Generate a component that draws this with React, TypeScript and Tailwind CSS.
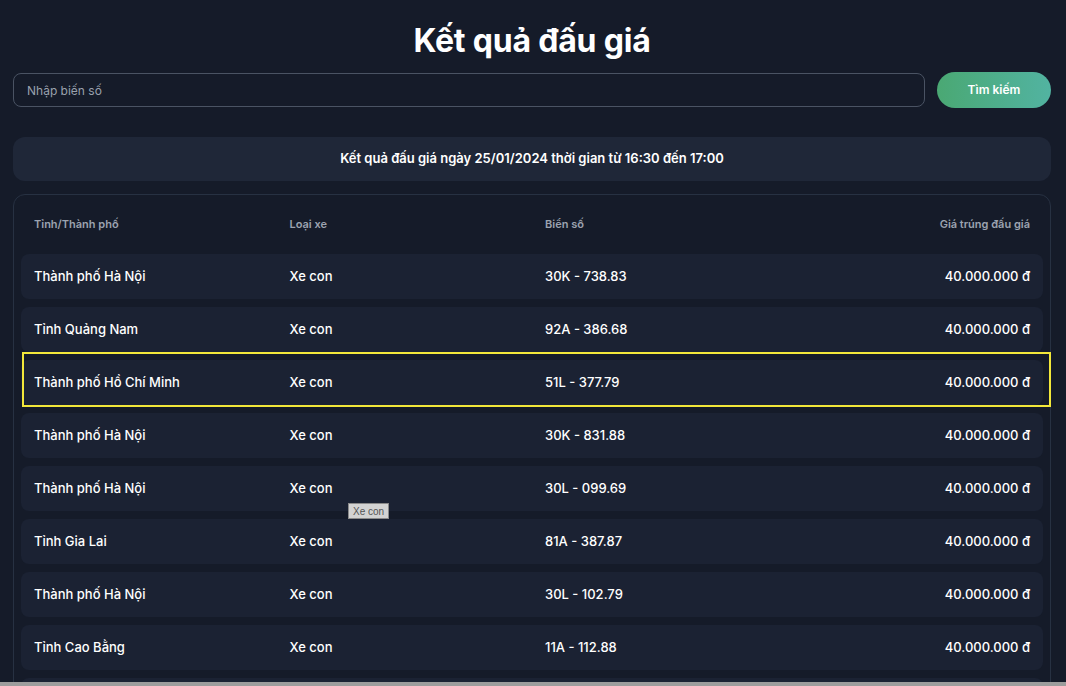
import React from 'react'

const rows = [
  { city: 'Thành phố Hà Nội', type: 'Xe con', plate: '30K - 738.83', price: '40.000.000 đ' },
  { city: 'Tỉnh Quảng Nam', type: 'Xe con', plate: '92A - 386.68', price: '40.000.000 đ' },
  { city: 'Thành phố Hồ Chí Minh', type: 'Xe con', plate: '51L - 377.79', price: '40.000.000 đ' },
  { city: 'Thành phố Hà Nội', type: 'Xe con', plate: '30K - 831.88', price: '40.000.000 đ' },
  { city: 'Thành phố Hà Nội', type: 'Xe con', plate: '30L - 099.69', price: '40.000.000 đ' },
  { city: 'Tỉnh Gia Lai', type: 'Xe con', plate: '81A - 387.87', price: '40.000.000 đ' },
  { city: 'Thành phố Hà Nội', type: 'Xe con', plate: '30L - 102.79', price: '40.000.000 đ' },
  { city: 'Tỉnh Cao Bằng', type: 'Xe con', plate: '11A - 112.88', price: '40.000.000 đ' },
  { city: 'Thành phố Hà Nội', type: 'Xe con', plate: '30K - 845.12', price: '40.000.000 đ' },
]

export default function App() {
  return (
    <div className="min-h-screen bg-[#151b29] text-white font-['Inter','Noto_Sans',sans-serif] pl-[13px] pr-[15px] pb-8">
      {/* tiêu đề */}
      <h1 className="pt-[19px] text-center text-[32px] leading-[44px] font-bold tracking-[-0.2px]">
        Kết quả đấu giá
      </h1>

      {/* tìm kiếm */}
      <div className="mt-[9px] flex items-center gap-3">
        <input
          placeholder="Nhập biến số"
          className="flex-1 h-[34px] rounded-lg border border-[#4a5363] bg-[#151b29] px-[13px] text-xs text-white placeholder:text-[#9aa1ad] outline-none"
        />
        <button className="w-[114px] h-[36px] rounded-full bg-gradient-to-r from-[#4aa873] to-[#52b3a1] text-xs font-semibold text-white">
          Tìm kiếm
        </button>
      </div>

      {/* ngày */}
      <div className="mt-[29px] h-[44px] rounded-xl bg-[#1f2738] flex items-center justify-center text-[13px] font-semibold">
        Kết quả đấu giá ngày 25/01/2024 thời gian từ 16:30 đến 17:00
      </div>

      {/* bảng */}
      <div className="relative mt-[13px] rounded-xl border border-[#273142] p-[7px] flex flex-col gap-2">
        <div className="grid grid-cols-4 h-[44px] items-center text-[11px] font-semibold text-[#9ca3b0]">
          <div className="px-[13px]">Tỉnh/Thành phố</div>
          <div className="px-[13px]">Loại xe</div>
          <div className="px-[13px]">Biển số</div>
          <div className="px-[13px] text-right">Giá trúng đấu giá</div>
        </div>
        {rows.map((r, i) => (
          <div key={i} className="grid grid-cols-4 h-[45px] items-center rounded-lg bg-[#1b2233] text-[13px] font-medium">
            <div className="px-[13px]">{r.city}</div>
            <div className="px-[13px]">{r.type}</div>
            <div className="px-[13px]">{r.plate}</div>
            <div className="px-[13px] text-right">{r.price}</div>
          </div>
        ))}

        {/* khung đánh dấu */}
        <div className="absolute left-[8px] top-[157px] w-[1029px] h-[55px] border-2 border-[#f2e73a] pointer-events-none" />
        {/* tooltip */}
        <div className="absolute left-[334px] top-[308px] px-[4px] h-[16px] flex items-center bg-[#d3d3d3] border border-[#8a8a8a] text-[10px] text-[#555] font-['Liberation_Sans',sans-serif]">
          Xe con
        </div>
      </div>

      {/* thanh cuộn */}
      <div className="fixed inset-x-0 bottom-0 h-[4px] bg-[#9d9d9d]" />
    </div>
  )
}
